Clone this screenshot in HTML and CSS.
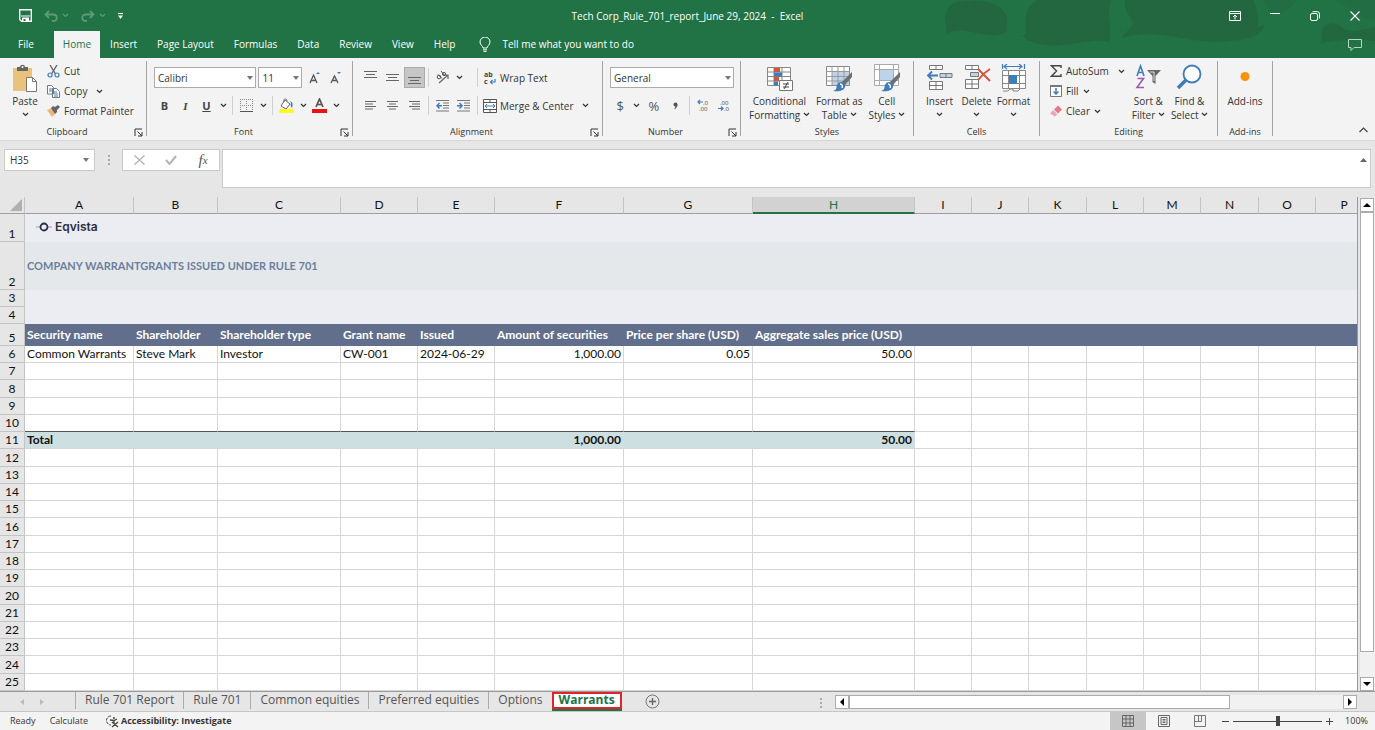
FILE: index.html
```html
<!DOCTYPE html>
<html lang="en">
<head>
  <meta charset="UTF-8" />
  <meta name="viewport" content="width=device-width, initial-scale=1.0"/>
  <title>Tech Corp_Rule_701_report_June 29, 2024 - Excel</title>
  <link rel="stylesheet" href="styles.css">
</head>
<body>

  <!-- shared small icons -->
  <svg class="defs" width="0" height="0" aria-hidden="true">
    <symbol id="chev" viewBox="0 0 7 5"><path d="M1 1l2.5 2.5L6 1" fill="none" stroke="currentColor" stroke-width="1.2"/></symbol>
    <symbol id="caret" viewBox="0 0 6 4"><path d="M0 0h6L3 4z" fill="currentColor"/></symbol>
    <symbol id="launch" viewBox="0 0 9 9"><path d="M1 8V1h7M3.500 3.500L8 8M8 4v4H4" fill="none" stroke="currentColor"/></symbol>
    <symbol id="brush" viewBox="0 0 20 20"><path d="M19 0v5l-7 8-3-3z" fill="#6f6f6f"/><path d="M8 10c3 0 5 2 4 5-1 4-7 5-12 4 4-1 3-3 4-6 1-2 2-3 4-3z" fill="#3f7cb8"/><path d="M7 12c2 0 3 2 2 4" fill="none" stroke="#fff" stroke-width="1.500"/></symbol>
  </svg>

  <header class="app-head">
    <svg class="art" viewBox="0 0 430 58" preserveAspectRatio="none" aria-hidden="true">
      <path d="M0 20C0 4 12 0 24 1c14-2 32 2 37 14 3 8-2 14 2 15-8 8-22 5-32 3-12-3-22-4-31 2 2-4 1-9 0-15z"/>
      <path d="M92 0h74c-4 12 0 26-1 43-10-4-20-2-34 0-16 4-46 4-54-8 4 1 4-2 4-6-2-12 0-22 11-29z"/>
      <path d="M180 0h128c4 8 6 18 5 27l6-2c-2 12-20 16-50 17-30-1-62-14-92-4 2-6 14-12 10-18-4-6-8-12-7-20z"/>
      <path d="M375 44c4-4-2-14 6-19 6-4 14-1 18 4 8 4 20 0 31-2v14c-18-2-38-2-55 3z"/>
      <path class="faint" d="M318 0h34c-6 8-14 14-26 14zM390 0h40v20c-14-2-22-10-40-20z"/>
    </svg>

    <div class="title-bar">
      <div class="quick">
        <button class="q save" aria-label="Save"><svg width="13" height="13" viewBox="0 0 13 13"><path d="M.7.7h11.600v11.600H2.500L.7 10.500z" fill="none" stroke="#fff" stroke-width="1.400"/><path d="M3 8.500h7V12H3z" fill="#fff"/><path d="M2 6.500h9v1H2z" fill="#fff"/><path d="M4.500 10h2v2h-2z" fill="#217346"/></svg></button>
        <button class="q faded" aria-label="Undo"><svg width="14" height="12" viewBox="0 0 14 12"><path d="M5 1L1.500 4.500 5 8M2 4.500h7c5 0 5 6.500 0 6.500H8" fill="none" stroke="currentColor" stroke-width="1.800"/></svg><svg width="7" height="5"><use href="#chev"/></svg></button>
        <button class="q faded" aria-label="Redo"><svg width="14" height="12" viewBox="0 0 14 12"><path d="M9 1l3.500 3.500L9 8M12 4.500H5c-5 0-5 6.500 0 6.500h1" fill="none" stroke="currentColor" stroke-width="1.800"/></svg><svg width="7" height="5"><use href="#chev"/></svg></button>
        <button class="q" aria-label="Customize toolbar"><svg width="5" height="6" viewBox="0 0 5 6"><path d="M0 0h5v1H0zM0 2.500h5L2.500 6z" fill="#fff"/></svg></button>
      </div>
      <div class="doc-title">Tech Corp_Rule_701_report_June 29, 2024&nbsp; -&nbsp; Excel</div>
      <div class="window-btns">
        <button aria-label="Ribbon display"><svg width="12" height="10" viewBox="0 0 12 10"><path d="M.5.5h11v9H.5zM.5 2.500h11M6 8.500V4M4 6l2-2 2 2" fill="none" stroke="#fff"/></svg></button>
        <button aria-label="Minimize"><svg width="10" height="10" viewBox="0 0 10 10"><path d="M0 2.500h10" stroke="#fff"/></svg></button>
        <button aria-label="Restore"><svg width="10" height="10" viewBox="0 0 10 10"><rect x=".5" y="2.500" width="7" height="7" rx="1.500" fill="none" stroke="#fff"/><path d="M2.500.7H7.500Q9.400.7 9.400 2.600V7.500" fill="none" stroke="#fff"/></svg></button>
        <button aria-label="Close"><svg width="10" height="10" viewBox="0 0 10 10"><path d="M.5.5l9 9M9.500.5l-9 9" stroke="#fff" stroke-width="1.100"/></svg></button>
      </div>
    </div>

    <nav class="menu">
      <a href="#" class="file">File</a>
      <a href="#" class="active">Home</a>
      <a href="#">Insert</a>
      <a href="#">Page Layout</a>
      <a href="#">Formulas</a>
      <a href="#">Data</a>
      <a href="#">Review</a>
      <a href="#">View</a>
      <a href="#">Help</a>
      <a href="#" class="tell"><svg width="12" height="15" viewBox="0 0 12 15"><path d="M4 11c0-2-3-3-3-6a5 5 0 0 1 10 0c0 3-3 4-3 6zM4 12.800h4M4.500 14.400h3" fill="none" stroke="#fff"/></svg>Tell me what you want to do</a>
      <button class="comment" aria-label="Comments"><svg width="14" height="12" viewBox="0 0 14 12"><path d="M.5.5h13v8H6l-3 3v-3H.5z" fill="none" stroke="#b9d3c4"/></svg></button>
    </nav>
  </header>

  <section class="ribbon">
    <div class="group clipboard">
      <div class="tools">
        <button class="big paste">
          <svg width="26" height="28" viewBox="0 0 26 28"><path d="M1 4h19v23H1z" fill="#e9c27c"/><path d="M5 3h3c0-3 5-3 5 0h3v4H5z" fill="#666"/><circle cx="10.500" cy="3" r="1" fill="#fff"/><path d="M14.500 13.500h6l4 4v10h-10z" fill="#fff" stroke="#777"/><path d="M20.500 13.500v4h4" fill="none" stroke="#777"/></svg>
          <span>Paste</span><svg width="7" height="5"><use href="#chev"/></svg>
        </button>
        <div class="stack">
          <button><svg width="13" height="13" viewBox="0 0 13 13"><path d="M3 0l5.500 9M10 0L4.500 9" stroke="#666" stroke-width="1.400"/><circle cx="3" cy="10" r="2" fill="none" stroke="#3f7cb8" stroke-width="1.200"/><circle cx="10" cy="10" r="2" fill="none" stroke="#3f7cb8" stroke-width="1.200"/></svg>Cut</button>
          <button><svg width="13" height="13" viewBox="0 0 13 13"><path d="M.5.5h4l2 2V9h-6zM5.500 3.500h4l3 3v6h-7z" fill="#fff" stroke="#777"/><path d="M2 4h3M2 6h3M7 7h3M7 9h4M7 11h4" stroke="#3f7cb8"/></svg>Copy<svg class="far" width="7" height="5"><use href="#chev"/></svg></button>
          <button><svg width="13" height="12" viewBox="0 0 13 12"><path d="M0 5l5-2 4 5-4 4z" fill="#e9b878"/><path d="M4 3l2-2 2 1 3-2 2 2-3 3v2l-2 2z" fill="#666"/></svg>Format Painter</button>
        </div>
      </div>
      <div class="caption"><span>Clipboard</span><button class="launcher" aria-label="Clipboard options"><svg width="9" height="9"><use href="#launch"/></svg></button></div>
    </div>

    <div class="group font">
      <div class="tools rows">
        <div class="row">
          <span class="pick family"><select aria-label="Font"><option>Calibri</option></select><svg width="6" height="4"><use href="#caret"/></svg></span>
          <span class="pick size"><select aria-label="Font size"><option>11</option></select><svg width="6" height="4"><use href="#caret"/></svg></span>
          <button class="ic" aria-label="Increase font size"><svg width="12" height="14" viewBox="0 0 12 14"><path d="M1 12l3.500-8L8 12M2.300 9.500h4.400" fill="none" stroke="#555" stroke-width="1.300"/><path d="M7 3l2-2 2 2z" fill="#3f7cb8"/></svg></button>
          <button class="ic" aria-label="Decrease font size"><svg width="12" height="14" viewBox="0 0 12 14"><path d="M1 12l3.500-7L8 12M2.300 9.500h4.400" fill="none" stroke="#555" stroke-width="1.300"/><path d="M7 1l2 2 2-2z" fill="#3f7cb8"/></svg></button>
        </div>
        <div class="row">
          <button class="ic b">B</button>
          <button class="ic i">I</button>
          <button class="ic u">U</button>
          <button class="dd" aria-label="Underline style"><svg width="7" height="5"><use href="#chev"/></svg></button>
          <i class="bar"></i>
          <button class="ic" aria-label="Borders"><svg width="13" height="13" viewBox="0 0 13 13"><path d="M.5 0v12M6.500 0v12M12.500 0v12M0 .5h13M0 6.500h13" fill="none" stroke="#888" stroke-dasharray="1 1"/><path d="M0 12.500h13" stroke="#555"/></svg></button>
          <button class="dd" aria-label="Border style"><svg width="7" height="5"><use href="#chev"/></svg></button>
          <i class="bar"></i>
          <button class="ic" aria-label="Fill color"><svg width="15" height="15" viewBox="0 0 15 15"><path d="M6 2l5 4-4 5-5-3zM5 4c-1-4 3-4 3-1" fill="#fff" stroke="#666"/><path d="M11 3c3 1 3 4 2 7-1-1-2-3-1-5z" fill="#3f7cb8"/><path d="M0 11h15v4H0z" fill="#ffff1a"/></svg></button>
          <button class="dd" aria-label="Fill palette"><svg width="7" height="5"><use href="#chev"/></svg></button>
          <button class="ic" aria-label="Font color"><svg width="15" height="15" viewBox="0 0 15 15"><path d="M4 9l3.500-8L11 9M5.300 6.500h4.400" fill="none" stroke="#555" stroke-width="1.700"/><path d="M0 11h15v4H0z" fill="#e81313"/></svg></button>
          <button class="dd" aria-label="Font palette"><svg width="7" height="5"><use href="#chev"/></svg></button>
        </div>
      </div>
      <div class="caption"><span>Font</span><button class="launcher" aria-label="Font options"><svg width="9" height="9"><use href="#launch"/></svg></button></div>
    </div>

    <div class="group align">
      <div class="tools rows">
        <div class="row">
          <button class="ic" aria-label="Top align"><svg width="13" height="13" viewBox="0 0 13 13"><path d="M0 .5h13M2 3.500h9M0 6.500h13" stroke="#666"/></svg></button>
          <button class="ic" aria-label="Middle align"><svg width="13" height="13" viewBox="0 0 13 13"><path d="M0 3.500h13M2 6.500h9M0 9.500h13" stroke="#666"/></svg></button>
          <button class="ic on" aria-label="Bottom align"><svg width="13" height="13" viewBox="0 0 13 13"><path d="M0 6.500h13M2 9.500h9M0 12.500h13" stroke="#666"/></svg></button>
          <i class="bar"></i>
          <button class="ic" aria-label="Orientation"><svg width="14" height="13" viewBox="0 0 14 13"><path d="M3 12L12 4M12 8V4H8" fill="none" stroke="#666" stroke-width="1.200"/><circle cx="3" cy="6" r="1.800" fill="none" stroke="#555"/><path d="M2 3.500l4 4M5 0l4 5" stroke="#555"/><circle cx="8" cy="3" r="1.600" fill="none" stroke="#555"/></svg></button>
          <button class="dd" aria-label="Orientation menu"><svg width="7" height="5"><use href="#chev"/></svg></button>
          <i class="bar gap"></i>
          <button class="txt"><svg width="14" height="14" viewBox="0 0 14 14"><text x="1" y="6" class="tiny">ab</text><text x="1" y="13" class="tiny">c</text><path d="M12 8v3H8M9.500 9L7.500 11l2 2" fill="none" stroke="#3f7cb8" stroke-width="1.200"/></svg>Wrap Text</button>
        </div>
        <div class="row">
          <button class="ic" aria-label="Align left"><svg width="11" height="9" viewBox="0 0 11 9"><path d="M0 .5h11M0 3h8M0 5.500h11M0 8h8" stroke="#666"/></svg></button>
          <button class="ic" aria-label="Center"><svg width="11" height="9" viewBox="0 0 11 9"><path d="M0 .5h11M2 3h7M0 5.500h11M2 8h7" stroke="#666"/></svg></button>
          <button class="ic" aria-label="Align right"><svg width="11" height="9" viewBox="0 0 11 9"><path d="M0 .5h11M3 3h8M0 5.500h11M3 8h8" stroke="#666"/></svg></button>
          <i class="bar"></i>
          <button class="ic" aria-label="Decrease indent"><svg width="13" height="12" viewBox="0 0 13 12"><path d="M0 .5h13M7 3h6M7 5.500h6M7 8h6M0 11h13" stroke="#777"/><path d="M6 5.700H1M3.500 3L1 5.700l2.500 2.700" fill="none" stroke="#3f7cb8" stroke-width="1.500"/></svg></button>
          <button class="ic" aria-label="Increase indent"><svg width="13" height="12" viewBox="0 0 13 12"><path d="M0 .5h13M7 3h6M7 5.500h6M7 8h6M0 11h13" stroke="#777"/><path d="M0 5.700h5M2.500 3L5 5.700 2.500 8.400" fill="none" stroke="#3f7cb8" stroke-width="1.500"/></svg></button>
          <i class="bar"></i>
          <button class="txt"><svg width="14" height="14" viewBox="0 0 14 14"><path d="M.5.5h13v13H.5zM.5 3.500h13M.5 10.500h13M7 .5v3M7 10.500v3" fill="#fff" stroke="#555"/><path d="M2 7h10M4 5L2 7l2 2M10 5l2 2-2 2" fill="none" stroke="#3f7cb8"/></svg>Merge &amp; Center<svg class="far" width="7" height="5"><use href="#chev"/></svg></button>
        </div>
      </div>
      <div class="caption"><span>Alignment</span><button class="launcher" aria-label="Alignment options"><svg width="9" height="9"><use href="#launch"/></svg></button></div>
    </div>

    <div class="group number">
      <div class="tools rows">
        <div class="row">
          <span class="pick format"><select aria-label="Number format"><option>General</option></select><svg width="6" height="4"><use href="#caret"/></svg></span>
        </div>
        <div class="row">
          <button class="ic sym">$</button>
          <button class="dd" aria-label="Currency"><svg width="7" height="5"><use href="#chev"/></svg></button>
          <button class="ic sym percent-style">%</button>
          <button class="ic comma" aria-label="Comma style"><svg width="5" height="8" viewBox="0 0 5 8"><circle cx="2.500" cy="2.500" r="2" fill="#555"/><path d="M4.500 2.500C4.500 5 3 6.500 1 7.500 2 6 2.500 5 2.500 3z" fill="#555"/></svg></button>
          <i class="bar"></i>
          <button class="ic" aria-label="Increase decimal"><svg width="12" height="13" viewBox="0 0 12 13"><path d="M6 3H1M3 1L1 3l2 2" fill="none" stroke="#3f7cb8" stroke-width="1.200"/><text x="6" y="6" class="dec">.0</text><text x="2" y="12" class="dec">.00</text></svg></button>
          <button class="ic" aria-label="Decrease decimal"><svg width="12" height="13" viewBox="0 0 12 13"><text x="2" y="6" class="dec">.00</text><path d="M0 9.500h5M3 7.500l2 2-2 2" fill="none" stroke="#3f7cb8" stroke-width="1.200"/><text x="6" y="12" class="dec">.0</text></svg></button>
        </div>
      </div>
      <div class="caption"><span>Number</span><button class="launcher" aria-label="Number options"><svg width="9" height="9"><use href="#launch"/></svg></button></div>
    </div>

    <div class="group styles">
      <div class="tools">
        <button class="big">
          <svg width="28" height="28" viewBox="0 0 28 28"><path d="M2.500 3.500h23v18h-23zM2.500 8h23M2.500 12.500h23M2.500 17h23M9 3.500v18M17 3.500v18" fill="#fff" stroke="#888"/><path d="M9 4h6v4H9zM9 13h5v4H9z" fill="#d2573a"/><path d="M9 8.500h8v4H9zM9 17.500h4v4H9z" fill="#3f7cb8"/><path d="M14.500 16.500h13v10h-13z" fill="#fff" stroke="#777"/><path d="M18 20h6M18 23h6M23 18l-4 7" stroke="#444"/></svg>
          <span>Conditional</span><span>Formatting <svg width="7" height="5"><use href="#chev"/></svg></span>
        </button>
        <button class="big">
          <svg width="28" height="28" viewBox="0 0 28 28"><path d="M1.500 2.500h23v19h-23z" fill="#fff" stroke="#888"/><path d="M7 8h17v13H7z" fill="#bdd3ea"/><path d="M1.500 7.500h23M1.500 12.500h23M1.500 17h23M7 2.500v19M13 2.500v19M19 2.500v19" stroke="#999"/><use href="#brush" x="8" y="8" width="20" height="20"/></svg>
          <span>Format as</span><span>Table <svg width="7" height="5"><use href="#chev"/></svg></span>
        </button>
        <button class="big">
          <svg width="28" height="28" viewBox="0 0 28 28"><path d="M1.500.5h24v21h-24zM1.500 5.500h24M1.500 16.500h24M6.500.5v21M20.500.5v21" fill="#fff" stroke="#aaa"/><path d="M7 6h13v10H7z" fill="#bdd3ea"/><use href="#brush" x="8" y="8" width="20" height="20"/></svg>
          <span>Cell</span><span>Styles <svg width="7" height="5"><use href="#chev"/></svg></span>
        </button>
      </div>
      <div class="caption"><span>Styles</span></div>
    </div>

    <div class="group cells">
      <div class="tools">
        <button class="big">
          <svg width="28" height="28" viewBox="0 0 28 28"><path d="M3.500 1.500h13v4h-13zM10 1.500v4M3.500 17.500h13v8h-13zM10 17.500v8M3.500 21.500h13" fill="#fff" stroke="#777"/><path d="M14 9.500h12v4H14zM20 9.500v4" fill="#bdd3ea" stroke="#777"/><path d="M12 11.500H2M6 7.500l-4 4 4 4" fill="none" stroke="#3f7cb8" stroke-width="1.800"/></svg>
          <span>Insert</span><svg width="7" height="5"><use href="#chev"/></svg>
        </button>
        <button class="big">
          <svg width="28" height="28" viewBox="0 0 28 28"><path d="M2.500 1.500h13v4h-13zM9 1.500v4M2.500 15.500h13v9h-13zM9 15.500v9M2.500 20h13" fill="#fff" stroke="#777"/><path d="M7.500 8.500h8v4h-8z" fill="#bdd3ea" stroke="#777"/><path d="M15 5l12 12M27 5c-5 3-9 7-12 11" fill="none" stroke="#d2573a" stroke-width="2"/></svg>
          <span>Delete</span><svg width="7" height="5"><use href="#chev"/></svg>
        </button>
        <button class="big">
          <svg width="28" height="28" viewBox="0 0 28 28"><path d="M4 2.500h18M7 0L4 2.500 7 5M19 0l3 2.500L19 5M2.500 0v5M24.500 0v5" fill="none" stroke="#3f7cb8" stroke-width="1.200"/><path d="M2.500 6.500h23v18h-23zM2.500 11.500h23M2.500 19.500h23M8.500 6.500v18M19.500 6.500v18" fill="#fff" stroke="#888"/><path d="M9 11h8v9H9z" fill="#3f7cb8"/><path d="M3 27h5l2-2h3v2h5l2-2" fill="none" stroke="#888"/></svg>
          <span>Format</span><svg width="7" height="5"><use href="#chev"/></svg>
        </button>
      </div>
      <div class="caption"><span>Cells</span></div>
    </div>

    <div class="group editing">
      <div class="tools">
        <div class="stack">
          <button><svg width="12" height="12" viewBox="0 0 12 12"><path d="M11 3V.8H1.500L6.500 6l-5 5.200H11V9" fill="none" stroke="#444" stroke-width="1.400"/></svg>AutoSum<svg class="far" width="7" height="5"><use href="#chev"/></svg></button>
          <button><svg width="12" height="12" viewBox="0 0 12 12"><path d="M.5.500h11v11H.500z" fill="#fff" stroke="#777"/><path d="M0 0h12v2H0z" fill="#777"/><path d="M6 3v6M3.500 6.500L6 9l2.500-2.500" fill="none" stroke="#3f7cb8" stroke-width="1.500"/></svg>Fill <svg width="7" height="5"><use href="#chev"/></svg></button>
          <button><svg width="12" height="12" viewBox="0 0 12 12"><path d="M4 4.500L8 .5l4 4-4 4z" fill="#e2798f"/><path d="M3.300 5.200l4 4L5 11.500l-5-3z" fill="#eda5b3"/></svg>Clear <svg width="7" height="5"><use href="#chev"/></svg></button>
        </div>
        <button class="big">
          <svg width="28" height="28" viewBox="0 0 28 28"><path d="M3 12L6.500 2 10 12M4.300 8.500h4.400" fill="none" stroke="#3f7cb8" stroke-width="1.600"/><path d="M3.500 14.500h6L3 23.500h7" fill="none" stroke="#9b5bb5" stroke-width="1.600"/><path d="M13 6h14l-5.500 6v8l-3-2v-6z" fill="#666"/><path d="M16 8h4v9" stroke="#ddd" fill="none"/></svg>
          <span>Sort &amp;</span><span>Filter <svg width="7" height="5"><use href="#chev"/></svg></span>
        </button>
        <button class="big">
          <svg width="28" height="28" viewBox="0 0 28 28"><circle cx="17" cy="10" r="8.500" fill="#fff" stroke="#3f7cb8" stroke-width="1.800"/><path d="M11 16L3 24" stroke="#3f7cb8" stroke-width="3.500"/></svg>
          <span>Find &amp;</span><span>Select <svg width="7" height="5"><use href="#chev"/></svg></span>
        </button>
      </div>
      <div class="caption"><span>Editing</span></div>
    </div>

    <div class="group addins">
      <div class="tools">
        <button class="big"><svg width="28" height="28" viewBox="0 0 28 28"><circle cx="14" cy="12.500" r="4.500" fill="#f7920b"/></svg><span>Add-ins</span></button>
      </div>
      <div class="caption"><span>Add-ins</span></div>
    </div>
    <button class="collapse" aria-label="Collapse ribbon"><svg width="9" height="6" viewBox="0 0 9 6"><path d="M.5 5l4-4 4 4" fill="none" stroke="#444" stroke-width="1.200"/></svg></button>
  </section>

  <section class="formula-bar">
    <span class="name-box"><input type="text" value="H35" aria-label="Name box"><svg width="6" height="4"><use href="#caret"/></svg></span>
    <span class="dots"><i></i><i></i><i></i></span>
    <div class="fx-btns">
      <button aria-label="Cancel"><svg width="11" height="10" viewBox="0 0 11 10"><path d="M.5.5l10 9M10.500.5l-10 9" stroke="#b5b5b5" stroke-width="1.400"/></svg></button>
      <button aria-label="Enter"><svg width="12" height="10" viewBox="0 0 12 10"><path d="M1 5l3.500 4L11 1" fill="none" stroke="#b5b5b5" stroke-width="2"/></svg></button>
      <button class="fx" aria-label="Insert function">f<small>x</small></button>
    </div>
    <div class="formula"><textarea aria-label="Formula"></textarea><svg width="7" height="4" viewBox="0 0 7 4"><path d="M0 4h7L3.500 0z" fill="#666"/></svg></div>
  </section>

  <main class="work">
    <div class="sheet">
      <table>
        <colgroup>
          <col class="c-num"><col class="c-a"><col class="c-b"><col class="c-c"><col class="c-d"><col class="c-d"><col class="c-f"><col class="c-f"><col class="c-h">
          <col class="c-s"><col class="c-s"><col class="c-m"><col class="c-s"><col class="c-s"><col class="c-m"><col class="c-s"><col class="c-s">
        </colgroup>
        <thead>
          <tr>
            <th class="corner"><svg width="12" height="12" viewBox="0 0 12 12"><path d="M12 0v12H0z" fill="#b0b0b0"/></svg></th>
            <th>A</th><th>B</th><th>C</th><th>D</th><th>E</th><th>F</th><th>G</th><th class="current">H</th>
            <th>I</th><th>J</th><th>K</th><th>L</th><th>M</th><th>N</th><th>O</th><th>P</th>
          </tr>
        </thead>
        <tbody id="grid">
          <tr class="brand"><th>1</th><td colspan="16"><span class="logo"><svg width="16" height="10" viewBox="0 0 16 10"><path d="M0 5h16" stroke="#aab" stroke-width="1.200"/><circle cx="8" cy="5" r="3.500" fill="#ecedf2" stroke="#2b2f45" stroke-width="1.800"/></svg>Eqvista</span></td></tr>
          <tr class="heading"><th>2</th><td colspan="16">COMPANY WARRANTGRANTS ISSUED UNDER RULE 701</td></tr>
          <tr class="pale"><th>3</th><td colspan="16"></td></tr>
          <tr class="pale"><th>4</th><td colspan="16"></td></tr>
          <tr class="labels"><th>5</th><td>Security name</td><td>Shareholder</td><td>Shareholder type</td><td>Grant name</td><td>Issued</td><td>Amount of securities</td><td>Price per share (USD)</td><td>Aggregate sales price (USD)</td><td colspan="8"></td></tr>
        </tbody>
      </table>
    </div>
    <div class="vscroll">
      <button aria-label="Scroll up"><svg width="8" height="4" viewBox="0 0 8 4"><path d="M0 4h8L4 0z"/></svg></button>
      <div class="thumb"></div>
      <button aria-label="Scroll down"><svg width="8" height="4" viewBox="0 0 8 4"><path d="M0 0h8L4 4z"/></svg></button>
    </div>
  </main>

  <nav class="sheet-bar">
    <div class="sheet-nav">
      <button aria-label="Previous sheet"><svg width="4" height="6" viewBox="0 0 4 6"><path d="M4 0v6L0 3z" fill="#bbb"/></svg></button>
      <button aria-label="Next sheet"><svg width="4" height="6" viewBox="0 0 4 6"><path d="M0 0v6l4-3z" fill="#bbb"/></svg></button>
    </div>
    <a href="#">Rule 701 Report</a>
    <a href="#">Rule 701</a>
    <a href="#">Common equities</a>
    <a href="#">Preferred equities</a>
    <a href="#">Options</a>
    <a href="#" class="active"><span>Warrants</span></a>
    <button class="add" aria-label="New sheet"><svg width="15" height="15" viewBox="0 0 15 15"><circle cx="7.500" cy="7.500" r="6.500" fill="none" stroke="#777"/><path d="M4 7.500h7M7.500 4v7" stroke="#666" stroke-width="1.400"/></svg></button>
    <span class="dots"><i></i><i></i><i></i></span>
    <div class="hscroll">
      <button aria-label="Scroll left"><svg width="4" height="8" viewBox="0 0 4 8"><path d="M4 0v8L0 4z"/></svg></button>
      <div class="thumb"></div>
      <button aria-label="Scroll right"><svg width="4" height="8" viewBox="0 0 4 8"><path d="M0 0v8l4-4z"/></svg></button>
    </div>
  </nav>

  <footer class="status">
    <span>Ready</span>
    <span>Calculate</span>
    <a href="#" class="access"><svg width="14" height="13" viewBox="0 0 14 13"><path d="M6 1a4.500 4.500 0 1 0 0 9" fill="none" stroke="#444" stroke-dasharray="3 1"/><circle cx="9" cy="3" r="1" fill="#444"/><path d="M5 5l4 .5L12 4M9 5.500V8M7 7l6 5M13 7l-6 5" fill="none" stroke="#444" stroke-width="1.300"/></svg>Accessibility: Investigate</a>
    <div class="views">
      <button class="on" aria-label="Normal view"><svg width="12" height="12" viewBox="0 0 12 12"><path d="M.5.5h11v11H.5zM.5 4h11M.5 8h11M4 .5v11M8 .5v11" fill="none" stroke="#666"/></svg></button>
      <button aria-label="Page layout view"><svg width="12" height="12" viewBox="0 0 12 12"><path d="M.5.5h11v11H.5zM3 2.500h6v7H3zM4.500 4.500h3M4.500 6h3M4.500 7.500h3" fill="none" stroke="#666"/></svg></button>
      <button aria-label="Page break view"><svg width="12" height="12" viewBox="0 0 12 12"><path d="M.5.5h11v11H.5zM4.500.5v6M7.500.5v6M.5 6.500h7" fill="none" stroke="#777"/></svg></button>
    </div>
    <button class="zoom-btn" aria-label="Zoom out"><svg width="7" height="7" viewBox="0 0 7 7"><path d="M0 3.500h7" stroke="#444"/></svg></button>
    <input type="range" min="0" max="100" value="50" aria-label="Zoom">
    <button class="zoom-btn" aria-label="Zoom in"><svg width="7" height="7" viewBox="0 0 7 7"><path d="M0 3.500h7M3.500 0v7" stroke="#444"/></svg></button>
    <span class="percent">100%</span>
  </footer>

  <script>
    const rows = {
      6: { cells: ["Common Warrants", "Steve Mark", "Investor", "CW-001", "2024-06-29", "1,000.00", "0.05", "50.00"] },
      10: { cls: "before-total", cells: [] },
      11: { cls: "total", cells: ["Total", "", "", "", "", "1,000.00", "", "50.00"] }
    };

    const grid = document.getElementById("grid");
    for (let n = 6; n <= 25; n++) {
      const row = rows[n] || { cells: [] };
      const tr = document.createElement("tr");
      if (row.cls) tr.className = row.cls;
      let html = `<th>${n}</th>`;
      for (let c = 0; c < 16; c++) {
        html += `<td class="${c > 4 ? "num" : ""}">${row.cells[c] || ""}</td>`;
      }
      tr.innerHTML = html;
      grid.appendChild(tr);
    }
  </script>
</body>
</html>
```
FILE: styles.css
```css
* {
  box-sizing: border-box;
}

body {
  margin: 0;
  height: 100vh;
  display: flex;
  flex-direction: column;
  overflow: hidden;
  background: #e6e6e6;
  color: #333;
  font-family: "Open Sans", "Noto Sans", sans-serif;
  font-size: 10px;
  line-height: 14px;
}

button,
input,
select,
textarea {
  margin: 0;
  padding: 0;
  border: none;
  background: none;
  color: inherit;
  font: inherit;
}

a {
  color: inherit;
  text-decoration: none;
}

svg {
  flex: none;
}

.defs {
  position: absolute;
}

/* title bar and menu */
.app-head {
  position: relative;
  flex: none;
  background: #217346;
  color: white;
}

.art {
  position: absolute;
  top: 0;
  right: 0;
  width: 430px;
  height: 58px;
  fill: #236740;
}

.faint {
  opacity: 0.5;
}

.title-bar {
  position: relative;
  display: grid;
  grid-template-columns: 1fr auto 1fr;
  align-items: center;
  height: 31px;
}

.quick {
  display: flex;
  align-items: center;
  gap: 12px;
  padding-left: 19px;
}

.q {
  display: flex;
  align-items: center;
  gap: 4px;
}

.faded {
  color: #5b9a77;
}

.window-btns {
  display: flex;
  justify-content: flex-end;
}

.window-btns button {
  display: flex;
  align-items: center;
  justify-content: center;
  width: 40px;
}

.menu {
  position: relative;
  display: flex;
  height: 27px;
  line-height: 27px;
}

.menu a {
  padding: 0 10px;
}

.menu .file {
  padding: 0 20px 0 18px;
}

.menu .active {
  padding: 0 9px;
  background: #f3f3f3;
  color: #217346;
  font-weight: normal;
}

.menu .tell {
  display: flex;
  align-items: center;
  gap: 11px;
  padding-left: 14px;
}

.comment {
  display: flex;
  align-items: center;
  margin-left: auto;
  padding-right: 13px;
}

/* ribbon */
.ribbon {
  flex: none;
  display: flex;
  height: 83px;
  padding: 3px 0 4px;
  background: #f3f3f3;
  border-bottom: 1px solid #d6d6d6;
}

.group {
  display: flex;
  flex-direction: column;
  flex: none;
  border-right: 1px solid #a5a5a5;
}

.clipboard { width: 147px; }
.font { width: 206px; }
.align { width: 250px; }
.number { width: 138px; }
.styles { width: 173px; }
.cells { width: 126px; }
.editing { width: 178px; }
.addins { width: 55px; }

.tools {
  display: flex;
  flex: 1;
  justify-content: center;
}

.tools.rows {
  flex-direction: column;
  justify-content: flex-start;
  gap: 7px;
  padding: 6px 6px 0 7px;
}

.row {
  display: flex;
  align-items: center;
  height: 21px;
}

.caption {
  display: flex;
  align-items: center;
  height: 8px;
  font-size: 9px;
}

.caption span {
  flex: 1;
  text-align: center;
}

.launcher {
  display: flex;
  width: 12px;
}

.big {
  display: flex;
  flex-direction: column;
  align-items: center;
  align-self: flex-start;
  padding: 3px 3px 0;
  white-space: nowrap;
}

.big > svg:first-child {
  margin-bottom: 2px;
}

.big > svg:last-child {
  margin-top: 4px;
}

.big span svg {
  margin-bottom: 2px;
}

.clipboard .tools {
  justify-content: flex-start;
  padding-left: 9px;
}

.stack {
  display: flex;
  flex-direction: column;
}

.stack button {
  display: flex;
  align-items: center;
  gap: 4px;
  height: 20px;
  white-space: nowrap;
}

.clipboard .stack {
  padding-left: 6px;
}

.far {
  margin-left: 5px;
}

.pick {
  position: relative;
  height: 21px;
}

.pick select {
  width: 100%;
  height: 100%;
  padding-left: 3px;
  appearance: none;
  background: white;
  border: 1px solid #ababab;
  border-radius: 0;
}

.pick svg {
  position: absolute;
  right: 3px;
  top: 9px;
  color: #777;
}

.family {
  width: 103px;
}

.size {
  width: 44px;
  margin: 0 2px;
}

.format {
  width: 125px;
}

.ic {
  display: flex;
  align-items: center;
  justify-content: center;
  width: 21px;
  height: 21px;
}

.ic.on {
  background: #c6c6c6;
  border: 1px solid #aaa;
}

.dd {
  display: flex;
  align-items: center;
  justify-content: center;
  width: 12px;
  height: 21px;
}

.b,
.i,
.u {
  color: #444;
  font-size: 11px;
  font-weight: bold;
}

.i {
  font-family: "Liberation Serif", serif;
  font-style: italic;
}

.u {
  text-decoration: underline;
}

.bar {
  width: 1px;
  height: 19px;
  margin: 0 3px;
  background: #d0d0d0;
}

.bar.gap {
  margin-left: 12px;
}

.txt {
  display: flex;
  align-items: center;
  gap: 3px;
  padding-left: 2px;
  white-space: nowrap;
}

.sym {
  color: #555;
  font-size: 13px;
}

.percent-style {
  width: 24px;
}

.tiny {
  fill: #444;
  font-size: 7px;
  font-weight: bold;
}

.dec {
  fill: #444;
  font-size: 6px;
}

.align .rows .ic:nth-child(2) {
  margin: 0 1px;
}

.cells .big {
  padding-left: 1px;
  padding-right: 1px;
  width: 37px;
}

.editing .tools {
  padding-left: 4px;
}

.editing .stack {
  margin-right: 4px;
}

.collapse {
  margin-left: auto;
  align-self: flex-end;
  padding: 0 7px;
}

/* formula bar */
.formula-bar {
  flex: none;
  display: flex;
  align-items: flex-start;
  padding: 8px 4px 9px;
}

.name-box {
  position: relative;
  width: 91px;
  height: 22px;
}

.name-box input {
  width: 100%;
  height: 100%;
  padding-left: 5px;
  background: white;
  border: 1px solid #cacaca;
}

.name-box svg {
  position: absolute;
  right: 6px;
  top: 9px;
  color: #777;
}

.dots {
  display: flex;
  flex-direction: column;
  justify-content: center;
  align-items: center;
  gap: 2px;
  width: 27px;
  height: 21px;
}

.dots i {
  width: 2px;
  height: 2px;
  background: #aaa;
}

.fx-btns {
  display: flex;
  width: 98px;
  height: 22px;
  margin-right: 2px;
  background: white;
  border: 1px solid #cacaca;
}

.fx-btns button {
  display: flex;
  align-items: center;
  justify-content: center;
  flex: 1;
}

.fx {
  color: #555;
  font-family: "Liberation Serif", serif;
  font-size: 15px;
  font-style: italic;
}

.fx small {
  font-size: 11px;
}

.formula {
  position: relative;
  display: flex;
  flex: 1;
}

.formula textarea {
  flex: 1;
  height: 39px;
  background: white;
  border: 1px solid #cacaca;
  resize: none;
}

.formula svg {
  position: absolute;
  right: 4px;
  top: 9px;
}

/* worksheet */
.work {
  display: flex;
  flex: 1;
  min-height: 0;
}

.sheet {
  flex: 1;
  min-width: 0;
  overflow: hidden;
  border-right: 1px solid #9a9a9a;
}

table {
  width: 1373px;
  table-layout: fixed;
  border-collapse: separate;
  border-spacing: 0;
  background: white;
  color: #111;
  font-family: Lato, sans-serif;
  font-size: 12px;
  line-height: 14px;
}

.c-num { width: 25px; }
.c-a { width: 109px; }
.c-b { width: 84px; }
.c-c { width: 123px; }
.c-d { width: 77px; }
.c-f { width: 129px; }
.c-h { width: 162px; }
.c-s { width: 57px; }
.c-m { width: 58px; }

th {
  padding: 0;
  background: #e6e6e6;
  border-right: 1px solid #c4c4c4;
  border-bottom: 1px solid #c4c4c4;
  font-weight: normal;
}

thead th {
  height: 17px;
  border-bottom-color: #9f9f9f;
}

.corner svg {
  display: block;
  margin-left: 10px;
}

th.current {
  background: #d2d2d2;
  border-bottom: 2px solid #217346;
  color: #217346;
}

td {
  height: 17px;
  padding: 0 2px;
  border-right: 1px solid #d6d6d6;
  border-bottom: 1px solid #d6d6d6;
  white-space: nowrap;
}

tr:nth-child(n + 8):nth-child(4n) td {
  height: 18px;
}

.num {
  text-align: right;
}

.brand th,
.heading th,
.labels th {
  vertical-align: bottom;
}

.brand td,
.heading td,
.pale td,
.labels td {
  border: none;
}

.brand td {
  height: 28px;
  padding: 0 0 3px 11px;
  background: #ecedf2;
}

.logo {
  display: flex;
  align-items: center;
  gap: 3px;
  color: #2b2f45;
  font-family: Inter, sans-serif;
  font-weight: 600;
}

.heading td {
  height: 48px;
  background: #e4e8eb;
  color: #6c7f9c;
  font-size: 11px;
  font-weight: bold;
}

.pale td {
  background: #ecedf2;
}

.labels td {
  height: 22px;
  background: #626f8c;
  color: white;
  font-weight: bold;
}

.before-total td:nth-child(-n + 9) {
  border-bottom-color: #555;
}

.total td {
  font-weight: bold;
}

.total td:nth-child(-n + 9) {
  background: #cedfe2;
  border-right-color: #cedfe2;
}

/* scrollbars */
.vscroll {
  display: flex;
  flex-direction: column;
  width: 15px;
  margin: 1px 0 0 2px;
  background: #f1f1f1;
}

.vscroll button,
.hscroll button {
  display: flex;
  align-items: center;
  justify-content: center;
  flex: none;
  width: 14px;
  height: 14px;
  background: white;
  border: 1px solid #ababab;
}

.vscroll .thumb {
  flex: 1;
  width: 14px;
  margin-bottom: 25px;
  background: white;
  border: 1px solid #ababab;
}

.sheet-bar {
  flex: none;
  display: flex;
  height: 21px;
  border-top: 1px solid #9a9a9a;
  border-bottom: 1px solid #c6c6c6;
  color: #555;
  font-size: 12px;
  line-height: 16px;
}

.sheet-nav {
  display: flex;
  align-items: center;
  gap: 16px;
  width: 75px;
  padding-left: 20px;
}

.sheet-nav button {
  display: flex;
}

.sheet-bar a {
  height: 17px;
  padding: 0 9px;
  border-left: 1px solid #ababab;
}

.sheet-bar .active {
  height: 19px;
  padding: 0;
  border-left: none;
  border-bottom: 2px solid #217346;
  color: #217346;
  font-weight: bold;
}

.sheet-bar .active span {
  display: block;
  height: 17px;
  padding: 0 5px;
  background: white;
  border: 2px solid #e3232b;
  line-height: 11px;
}

.add {
  display: flex;
  align-items: center;
  margin-left: 23px;
}

.sheet-bar .dots {
  margin-left: auto;
}

.hscroll {
  display: flex;
  align-self: center;
  width: 38%;
  height: 14px;
  margin-right: 18px;
  background: #f1f1f1;
}

.hscroll .thumb {
  width: 73%;
  margin-right: auto;
  background: white;
  border: 1px solid #ababab;
}

/* status bar */
.status {
  flex: none;
  display: flex;
  align-items: center;
  height: 18px;
  padding: 0 7px 0 10px;
  background: #f3f3f3;
  font-size: 9px;
}

.status > span:first-child {
  margin-right: 14px;
}

.access {
  display: flex;
  align-items: center;
  gap: 2px;
  margin-left: 17px;
  font-weight: bold;
}

.views {
  display: flex;
  align-self: stretch;
  margin-left: auto;
}

.views button {
  display: flex;
  align-items: center;
  justify-content: center;
  width: 36px;
}

.views .on {
  background: #c6c6c6;
}

.zoom-btn {
  display: flex;
  margin: 0 4px;
}

.status input {
  width: 89px;
  height: 12px;
  appearance: none;
  background: linear-gradient(#444, #444) center / 100% 1px no-repeat;
}

.status input::-webkit-slider-thumb {
  appearance: none;
  width: 4px;
  height: 10px;
  background: #444;
}

.percent {
  margin-left: 8px;
}
```
